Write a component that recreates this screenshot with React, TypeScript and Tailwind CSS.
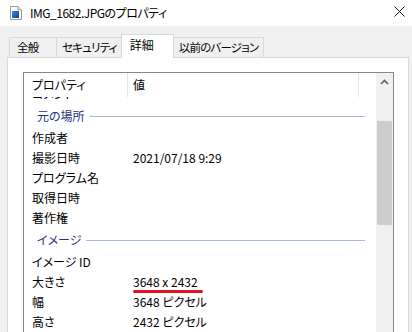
import React from 'react';

type Row = { name: string; value?: string; mark?: boolean };

const origin: Row[] = [
  { name: '作成者' },
  { name: '撮影日時', value: '2021/07/18 9:29' },
  { name: 'プログラム名' },
  { name: '取得日時' },
  { name: '著作権' },
];

const image: Row[] = [
  { name: 'イメージ ID' },
  { name: '大きさ', value: '3648 x 2432', mark: true },
  { name: '幅', value: '3648 ピクセル' },
  { name: '高さ', value: '2432 ピクセル' },
];

function FileIcon() {
  return (
    <svg width="12" height="14" viewBox="0 0 12 14" className="shrink-0">
      <path d="M0.5 0.5h7.5l3.5 3.5v9.5h-11z" fill="#fff" stroke="#9a9a9a" />
      <path d="M8 0.5v3.5h3.5" fill="#e8e8e8" stroke="#9a9a9a" />
      <defs>
        <linearGradient id="pic" x1="0" y1="0" x2="1" y2="1">
          <stop offset="0" stopColor="#3b8fe0" />
          <stop offset="1" stopColor="#0b3f9a" />
        </linearGradient>
      </defs>
      <rect x="2" y="5" width="7" height="7" fill="url(#pic)" />
    </svg>
  );
}

function GroupHeader({ label }: { label: string }) {
  return (
    <div className="h-[24px] flex items-center pl-[13px] pr-[11px] gap-[5px]">
      <span className="text-[#1e3287]">{label}</span>
      <div className="flex-1 h-px bg-[#a8b9e6]" />
    </div>
  );
}

function PropRow({ row }: { row: Row }) {
  return (
    <div className="h-[20px] flex items-center">
      <div className="w-[104px] pl-[8px] whitespace-nowrap">{row.name}</div>
      <div className="relative pl-[5px] whitespace-nowrap">
        {row.value}
        {row.mark && (
          <div className="absolute left-[5px] bottom-[-2px] w-[70px] h-[3px] rounded-full bg-[#e0141e]" />
        )}
      </div>
    </div>
  );
}

function Tab({ label, w, active }: { label: string; w: string; active?: boolean }) {
  return (
    <div
      className={
        active
          ? `${w} h-[24px] -mb-px -mx-px z-10 relative bg-white border border-b-0 border-[#d9d9d9] px-[8px] pt-[1px] whitespace-nowrap`
          : `${w} h-[20px] -mr-px bg-[#f0f0f0] border border-b-0 border-[#d9d9d9] px-[5px] whitespace-nowrap text-[11.5px] tracking-[-0.8px]`
      }
    >
      {label}
    </div>
  );
}

export default function App() {
  return (
    <div className="w-[412px] h-[332px] overflow-hidden bg-[#f0f0f0] text-black text-[12px] leading-[18px] font-['Noto_Sans_CJK_JP',sans-serif] [font-feature-settings:'palt']">
      {/* title bar */}
      <div className="h-[26px] bg-white flex items-center pl-[10px] pr-[4px]">
        <FileIcon />
        <span className="ml-[8px] flex-1 tracking-[-0.5px]">IMG_1682.JPGのプロパティ</span>
        <svg width="11" height="11" viewBox="0 0 11 11" className="mr-[3px] mt-[-4px]">
          <path d="M0.5 0.5l10 10M10.5 0.5l-10 10" stroke="#111" strokeWidth="1" />
        </svg>
      </div>

      {/* tabs */}
      <div className="h-[31px] flex items-end pl-[9px] pt-[8px]">
        <Tab label="全般" w="w-[48px] pl-[7px]" />
        <Tab label="セキュリティ" w="" />
        <Tab label="詳細" w="w-[53px]" active />
        <Tab label="以前のバージョン" w="" />
      </div>

      {/* panel */}
      <div className="ml-[7px] w-[402px] h-[300px] bg-white border border-[#d9d9d9] pt-[14px] pl-[15px] pr-[14px]">
        <div className="h-[300px] border border-[#828790] flex overflow-hidden">
          <div className="flex-1 flex flex-col">
            <div className="h-[24px] flex items-stretch shrink-0">
              <div className="w-[103px] pl-[8px] flex items-center">プロパティ</div>
              <div className="w-px bg-[#e5e5e5]" />
              <div className="w-[230px] pl-[5px] flex items-center">値</div>
              <div className="w-px bg-[#e5e5e5]" />
            </div>
            <div className="flex-1 overflow-hidden">
              <div className="-mt-[13px]">
                <PropRow row={{ name: 'コメント' }} />
              </div>
              <GroupHeader label="元の場所" />
              {origin.map((r) => (
                <PropRow key={r.name} row={r} />
              ))}
              <GroupHeader label="イメージ" />
              {image.map((r) => (
                <PropRow key={r.name} row={r} />
              ))}
            </div>
          </div>
          {/* scrollbar */}
          <div className="w-[17px] bg-[#f0f0f0] flex flex-col shrink-0">
            <div className="h-[17px] flex items-center justify-center">
              <svg width="9" height="6" viewBox="0 0 9 6">
                <path d="M1 5l3.5-3.5L8 5" fill="none" stroke="#606060" strokeWidth="1.6" />
              </svg>
            </div>
            <div className="mt-[31px] mx-px h-[104px] bg-[#cdcdcd]" />
          </div>
        </div>
      </div>
    </div>
  );
}
